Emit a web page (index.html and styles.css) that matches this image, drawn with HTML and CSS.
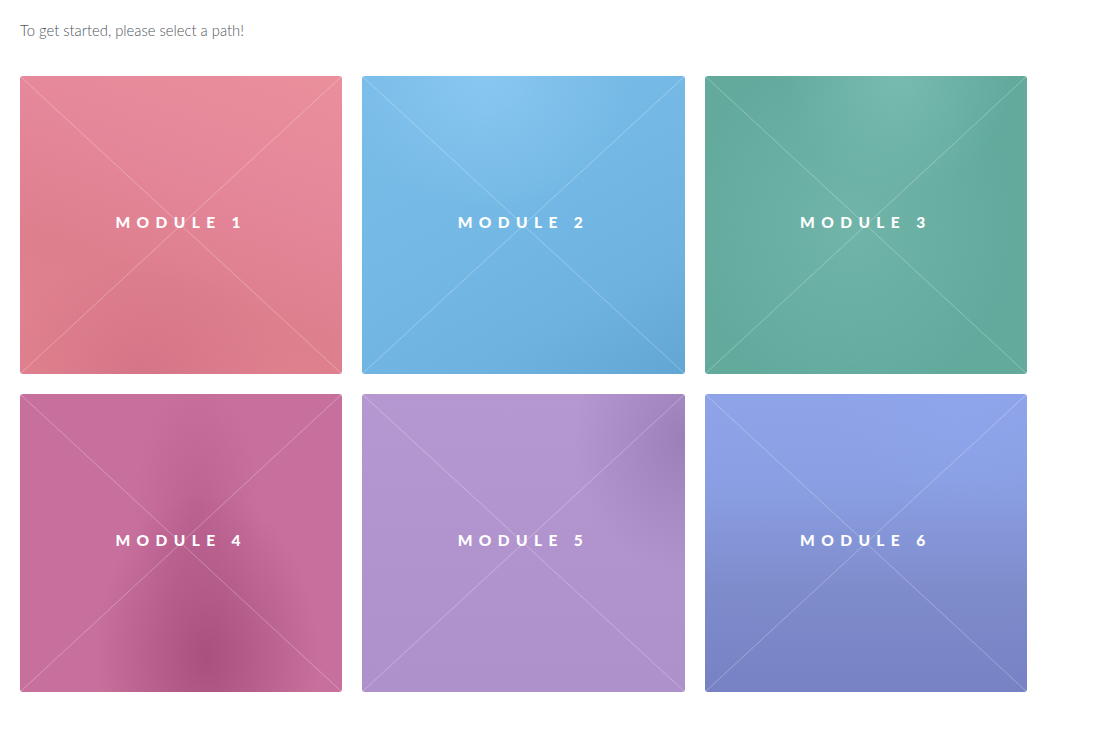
FILE: index.html
```html
<!DOCTYPE html>
<html lang="en">
<head>
<meta charset="utf-8">
<title>Select a path</title>
<link rel="stylesheet" href="styles.css">
</head>
<body>
<main class="page">
  <p class="intro">To get started, please select a path!</p>
  <div class="grid">
    <a class="card c1" href="#"><span class="label">MODULE 1</span></a>
    <a class="card c2" href="#"><span class="label">MODULE 2</span></a>
    <a class="card c3" href="#"><span class="label">MODULE 3</span></a>
    <a class="card c4" href="#"><span class="label">MODULE 4</span></a>
    <a class="card c5" href="#"><span class="label">MODULE 5</span></a>
    <a class="card c6" href="#"><span class="label">MODULE 6</span></a>
  </div>
</main>
</body>
</html>
```
FILE: styles.css
```css
html, body {
  margin: 0;
  padding: 0;
  background: #ffffff;
}
.page {
  padding: 20px;
  font-family: Lato, "Open Sans", sans-serif;
}
.intro {
  margin: 0 0 36px;
  font-size: 14.8px;
  line-height: 20px;
  font-weight: 300;
  color: #50555b;
}
.grid {
  width: 1007px;
  display: grid;
  grid-template-columns: repeat(3, 1fr);
  grid-auto-rows: 298px;
  gap: 20px;
}
.card {
  --x: linear-gradient(to top right, transparent calc(50% - 0.8px), rgba(255,255,255,0.26) 50%, transparent calc(50% + 0.8px));
  --y: linear-gradient(to bottom right, transparent calc(50% - 0.8px), rgba(255,255,255,0.26) 50%, transparent calc(50% + 0.8px));
  display: flex;
  align-items: center;
  justify-content: center;
  border-radius: 3px;
  text-decoration: none;
}
.label {
  color: #ffffff;
  font-family: Lato, sans-serif;
  font-weight: 900;
  font-size: 15.5px;
  letter-spacing: 6.4px;
  margin-top: -6px;
}
.c1 {
  background:
    var(--x), var(--y),
    radial-gradient(ellipse 45% 40% at 38% 100%, rgba(205,108,130,0.6), rgba(205,108,130,0) 100%),
    linear-gradient(200deg, #ea8f9c 0%, #e5879a 35%, #de7f8e 65%, #e2828f 100%);
}
.c2 {
  background:
    var(--x), var(--y),
    radial-gradient(ellipse 45% 45% at 38% 0%, rgba(138,200,240,0.9), rgba(138,200,240,0) 100%),
    linear-gradient(150deg, #79bce8 0%, #74b9e5 45%, #6eb2e0 75%, #62a6d3 100%);
}
.c3 {
  background:
    var(--x), var(--y),
    radial-gradient(ellipse 35% 40% at 60% 0%, rgba(122,188,178,0.9), rgba(122,188,178,0) 100%),
    radial-gradient(ellipse 50% 60% at 45% 50%, #71b4a9, rgba(113,180,169,0) 100%),
    #63aa9d;
}
.c4 {
  background:
    var(--x), var(--y),
    radial-gradient(ellipse 35% 55% at 58% 88%, rgba(168,80,126,1), rgba(168,80,126,0) 100%),
    radial-gradient(ellipse 20% 45% at 55% 40%, rgba(180,90,138,0.6), rgba(180,90,138,0) 100%),
    #c8709d;
}
.c5 {
  background:
    var(--x), var(--y),
    radial-gradient(ellipse 35% 45% at 100% 15%, rgba(156,126,185,1), rgba(156,126,185,0) 100%),
    linear-gradient(180deg, #b698d1 0%, #b194cd 50%, #ae90ca 100%);
}
.c6 {
  background:
    var(--x), var(--y),
    radial-gradient(ellipse 40% 30% at 80% 5%, rgba(142,165,236,0.8), rgba(142,165,236,0) 100%),
    linear-gradient(180deg, #8fa3e9 0%, #8a9fe3 30%, #7f8ccc 65%, #7682c3 100%);
}
```
